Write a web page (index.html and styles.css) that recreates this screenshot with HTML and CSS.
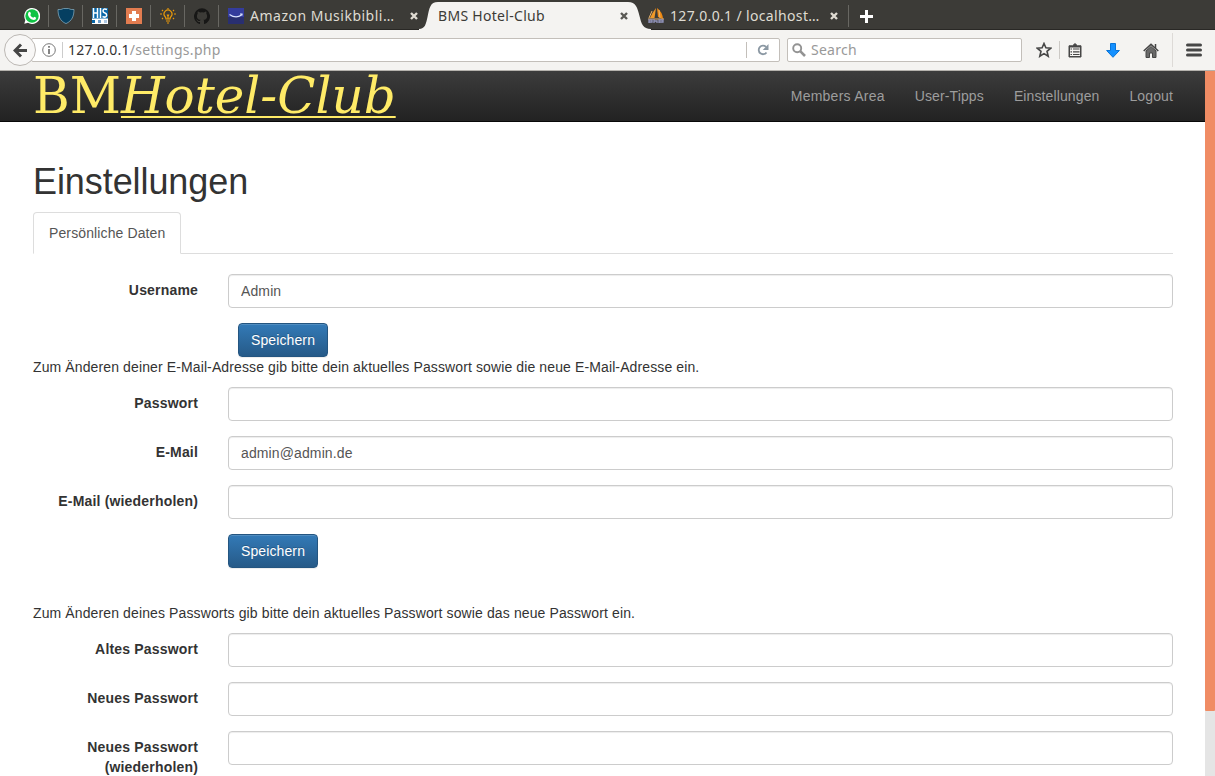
FILE: index.html
```html
<!DOCTYPE html>
<html lang="de">
<head>
<meta charset="utf-8">
<title>BMS Hotel-Club</title>
<link rel="stylesheet" href="styles.css">
</head>
<body>
<header class="browser">
  <div class="tabstrip">
    <div class="pinned"><svg width="16" height="16" viewBox="0 0 16 16"><path d="M.3 15.7 1.3 12A8 8 0 1 1 4 14.8Z" fill="#fff"/><circle cx="8" cy="8" r="6.7" fill="#0fc344"/><path d="M5 3.8 6.3 4 7 6 6.2 7Q7.2 9 9.3 9.8L10.3 8.8 12.2 9.8Q12 12 9.8 12 5.5 11.5 4 7 3.8 5 5 3.8Z" fill="#fff"/></svg></div>
    <div class="pinned"><svg width="18" height="16" viewBox="0 0 18 16"><path d="M1 1.500Q4 2 6.500.5H11.500Q14 2 17 1.500C17 8 15 13 9 15.600 3 13 1 8 1 1.500Z" fill="#053f61" stroke="#7da5b8" stroke-width=".8"/></svg></div>
    <div class="pinned"><svg width="16" height="16" viewBox="0 0 16 16"><path fill="#fff" d="M0 0H16V16H0Z"/><path fill="#0867a9" d="M0 0H16V10.500H0Z"/><path d="M1.500 0V10M5.500 0V10M1 5H6M8.500 0V10M15 1.500Q11 0 11 3 11 4.500 13 5 15 5.500 14.500 8 13.500 10 10.500 8.500" fill="none" stroke="#fff" stroke-width="1.500"/><path fill="#0867a9" d="M0 12H3V15H0Z"/><path fill="#6c9ecb" d="M6 12H9V15H6Z"/><path fill="#afc9e4" d="M12 12H15V15H12Z"/></svg></div>
    <div class="pinned"><svg width="16" height="16" viewBox="0 0 16 16"><path fill="#e27c50" d="M0 0H16V16H0Z"/><path fill="#fff" d="M6 3H10V6H13V10H10V13H6V10H3V6H6Z"/></svg></div>
    <div class="pinned"><svg width="16" height="16" viewBox="0 0 16 16" fill="none" stroke="#e99a0b" stroke-width="1.200"><path d="M6 11Q6 9.500 5 8.500A3.900 3.900 0 1 1 11 8.500Q10 9.500 10 11ZM6 13H10M7 15H9M7 6.500 8 8 9 6.500M8 8V11M8 0V1M2 2 3 3M14 2 13 3M0 6H2M14 6H16M2 11 3 10M14 11 13 10"/></svg></div>
    <div class="pinned"><svg width="16" height="16" viewBox="0 0 16 16"><path d="M8 .3a8 8 0 0 0-2.530 15.590c.4.070.55-.17.55-.38v-1.490c-2.230.48-2.700-.95-2.700-.95-.36-.92-.89-1.170-.89-1.170-.73-.5.060-.49.060-.49.8.06 1.230.83 1.230.83.720 1.220 1.870.87 2.330.66.070-.52.280-.87.5-1.070-1.770-.2-3.640-.89-3.640-3.950 0-.88.310-1.590.820-2.150-.08-.2-.36-1.020.080-2.120 0 0 .67-.21 2.200.82a7.600 7.600 0 0 1 4 0c1.530-1.040 2.200-.82 2.200-.82.440 1.100.16 1.920.080 2.120.51.560.82 1.270.82 2.150 0 3.070-1.870 3.750-3.650 3.950.29.250.54.730.54 1.480v2.200c0 .21.150.46.550.38A8 8 0 0 0 8 .3Z" fill="#171716"/></svg></div>
    <div class="tab tab-left">
      <svg width="16" height="16" viewBox="0 0 16 16"><path fill="#343c9c" d="M0 0H16V9H0Z"/><path fill="#292f70" d="M0 9H16V16H0Z"/><path d="M1.500 6.500Q8 11 13.500 7M12 6H14V7.500" fill="none" stroke="#dce5ff" stroke-width="1.200"/></svg>
      <span class="tab-title">Amazon Musikbibli…</span>
      <svg class="close" width="8" height="8" viewBox="0 0 8 8"><path d="M1 1 7 7M7 1 1 7"/></svg>
    </div>
    <div class="tab tab-active">
      <svg class="tab-shape" width="232" height="30" viewBox="0 0 232 30"><path d="M0 30V29C6 29 7 24 8.500 17 10.500 8 11 2 19 2H209C217 2 218.500 8 220.500 16 222.500 24 224 29 232 29V30Z" fill="#f4f3f1"/></svg>
      <span class="tab-title">BMS Hotel-Club</span>
      <svg class="close" width="8" height="8" viewBox="0 0 8 8"><path d="M1 1 7 7M7 1 1 7"/></svg>
    </div>
    <div class="tab tab-right">
      <svg width="16" height="16" viewBox="0 0 16 16"><path d="M8 0 6.500 10 2 10Q4 5 8 0Z" fill="#ef9929"/><path d="M9 0Q14.500 4 15 11L10 9Z" fill="#f08a12"/><path d="M4 3 1 10M11 2 12 10M0 11H16" stroke="#e9b36b"/><path d="M1 15V12H4V14H1M6 15V11M6 13H9V15M11 15V12H15V14H11" fill="none" stroke="#9295bd" stroke-width="1.300"/></svg>
      <span class="tab-title">127.0.0.1 / localhost…</span>
      <svg class="close" width="8" height="8" viewBox="0 0 8 8"><path d="M1 1 7 7M7 1 1 7"/></svg>
    </div>
    <div class="new-tab"><svg width="13" height="13" viewBox="0 0 13 13"><path d="M6.500 0V13M0 6.500H13" stroke="#fff" stroke-width="3"/></svg></div>
  </div>
  <div class="toolbar">
    <div class="back"><svg width="14" height="15" viewBox="0 0 14 15"><path d="M8 1.500 2 7.500 8 13.500M2.500 7.500H14" fill="none" stroke="#464646" stroke-width="3"/></svg></div>
    <div class="address">
      <svg width="14" height="14" viewBox="0 0 14 14"><circle cx="7" cy="7" r="6.300" fill="none" stroke="#777"/><path d="M7 6V11M7 3V4.800" stroke="#666" stroke-width="1.600"/></svg>
      <span class="url"><b>127.0.0.1</b>/settings.php</span>
      <span class="reload"><svg width="12" height="12" viewBox="0 0 12 12"><path d="M9.500 8.500A4.300 4.300 0 1 1 9 2.800" fill="none" stroke="#8b98a3" stroke-width="1.800"/><path d="M11.500 0V6H5.700Z" fill="#8b98a3"/></svg></span>
    </div>
    <div class="search"><svg width="14" height="14" viewBox="0 0 14 14"><circle cx="5.200" cy="5.200" r="4" fill="none" stroke="#939393" stroke-width="1.900"/><path d="M8.200 8.200 13 13" stroke="#939393" stroke-width="2.600"/></svg><span>Search</span></div>
    <div class="tools">
      <svg width="16" height="16" viewBox="0 0 16 16"><path d="M8 1.500 9.900 5.800 14.700 6.200 11 9.300 12.200 14.200 8 11.600 3.800 14.200 5 9.300 1.300 6.200 6.100 5.800Z" fill="none" stroke="#464646" stroke-width="1.600"/></svg>
      <span class="tool-divider"></span>
      <svg width="14" height="15" viewBox="0 0 14 15"><path d="M1 2.800H4.500L7 .6 9.500 2.800H13V14H1Z" fill="#464646" stroke="#464646" stroke-linejoin="round"/><path d="M2 4.500H12V13H2Z" fill="#f4f3f1"/><path d="M2.500 6H4M5 6H11.500M2.500 8.800H4M5 8.800H11.500M2.500 11.500H4M5 11.500H11.500" stroke="#464646" stroke-width="1.200"/></svg>
      <svg class="download" width="14" height="15" viewBox="0 0 14 15"><path d="M4.500.5H9.500V7.500H13.400L7 14.300.6 7.500H4.500Z" fill="#1490ff" stroke="#0874d8"/></svg>
      <svg class="home" width="16" height="15" viewBox="0 0 16 15"><path d="M3 8 8 3.500 13 8V14.500H9.500V10H6.500V14.500H3Z" fill="#696969" stroke="#464646"/><path d="M.7 8 8 1.300 15.300 8" fill="none" stroke="#464646" stroke-width="1.600"/><path d="M12.500 1V5" stroke="#464646" stroke-width="1.500"/></svg>
      <span class="menu-divider"></span>
      <svg width="16" height="14" viewBox="0 0 16 14"><path d="M1.500 2H14.500M1.500 7H14.500M1.500 12H14.500" stroke="#464646" stroke-width="3" stroke-linecap="round"/></svg>
    </div>
  </div>
</header>
<div class="viewport">
  <div class="page">
    <nav class="navbar">
      <a class="brand">BM<em>Hotel-Club</em></a>
      <div class="nav-links"><a class="members">Members Area</a><a>User-Tipps</a><a>Einstellungen</a><a>Logout</a></div>
    </nav>
    <main class="container">
      <h1>Einstellungen</h1>
      <div class="nav-tabs"><a>Persönliche Daten</a></div>
      <form>
        <div class="form-row"><label for="user">Username</label><input id="user" value="Admin"></div>
        <button class="btn btn-user" type="button">Speichern</button>
      </form>
      <form class="mail-form">
        <p>Zum Änderen deiner E-Mail-Adresse gib bitte dein aktuelles Passwort sowie die neue E-Mail-Adresse ein.</p>
        <div class="form-row"><label for="pass">Passwort</label><input id="pass" type="password"></div>
        <div class="form-row"><label for="mail">E-Mail</label><input id="mail" value="admin@admin.de"></div>
        <div class="form-row"><label for="mail2">E-Mail (wiederholen)</label><input id="mail2"></div>
        <button class="btn" type="button">Speichern</button>
      </form>
      <form>
        <p>Zum Änderen deines Passworts gib bitte dein aktuelles Passwort sowie das neue Passwort ein.</p>
        <div class="form-row"><label for="old">Altes Passwort</label><input id="old" type="password"></div>
        <div class="form-row"><label for="new">Neues Passwort</label><input id="new" type="password"></div>
        <div class="form-row"><label for="new2">Neues Passwort (wiederholen)</label><input id="new2" type="password"></div>
      </form>
    </main>
  </div>
  <div class="scrollbar"><div class="thumb"></div></div>
</div>
</body>
</html>
```
FILE: styles.css
```css
* { box-sizing: border-box; }
body { margin: 0; height: 776px; overflow: hidden; display: flex; flex-direction: column; background: #fff; color: #333; font: 14px/20px "Liberation Sans", Arial, sans-serif; letter-spacing: .117px; }
svg { display: block; flex: none; }
.browser { flex: none; height: 71px; font-family: "Noto Sans", "Open Sans", sans-serif; }
.tabstrip { height: 30px; display: flex; background: #3c3b37; border-bottom: 1px solid #292825; padding-left: 15px; }
.pinned { width: 34px; display: flex; align-items: center; justify-content: center; position: relative; padding-top: 2px; }
.pinned::after { content: ""; position: absolute; right: 0; top: 5px; width: 1px; height: 22px; background: #686762; }
.tab { display: flex; align-items: center; flex: none; position: relative; padding-top: 2px; color: #dfdbd2; }
.tab-title { white-space: nowrap; }
.tab-left { width: 200px; padding-left: 9px; }
.tab-left .tab-title { width: 160px; margin-left: 6px; letter-spacing: .5px; }
.tab-active { width: 232px; margin-right: -6px; padding-left: 19px; color: #3c3b37; z-index: 1; }
.tab-active .tab-title { width: 182px; letter-spacing: .3px; }
.tab-shape { position: absolute; left: 0; top: 0; }
.tab-active .tab-title, .tab-active .close { position: relative; }
.tab-right { width: 203px; padding-left: 3px; z-index: 2; }
.tab-right .tab-title { margin-left: 6px; width: 160px; letter-spacing: .35px; }
.close path { stroke: #dfdbd2; stroke-width: 2.4; }
.tab-active .close path { stroke: #595854; }
.new-tab { position: relative; padding: 10px 0 0 12px; }
.new-tab::before { content: ""; position: absolute; left: 0; top: 5px; width: 1px; height: 22px; background: #686762; }
.toolbar { height: 41px; display: flex; align-items: center; background: #f4f3f1; border-bottom: 1px solid #b5b2ad; padding-left: 4px; }
.back { width: 32px; height: 32px; border: 1px solid #bcb8b4; border-radius: 50%; background: #f8f7f6; display: flex; align-items: center; justify-content: center; flex: none; z-index: 1; }
.address { height: 24px; width: 749px; margin-left: -5px; border: 1px solid #c3bfba; border-radius: 2px; background: #fff; display: flex; align-items: center; padding-left: 10px; }
.url { margin-left: 6px; border-left: 1px solid #ccc; padding-left: 5px; line-height: 16px; color: #999; width: 684px; white-space: nowrap; letter-spacing: .28px; }
.url b { font-weight: 400; color: #333; }
.reload { border-left: 1px solid #c3bfba; height: 16px; padding: 2px 0 0 10px; }
.search { width: 235px; height: 24px; margin-left: 7px; display: flex; align-items: center; gap: 5px; border: 1px solid #c3bfba; border-radius: 2px; background: #fff; padding-left: 4px; color: #999; letter-spacing: .25px; }
.tools { display: flex; align-items: center; flex: 1; padding-left: 14px; }
.tool-divider { width: 1px; height: 18px; background: #ccc9c5; margin: 0 8px 0 7px; }
.download { margin-left: 24px; }
.home { margin-left: 23px; }
.menu-divider { width: 1px; height: 34px; background: #dddad7; margin: 0 13px; }
.viewport { display: flex; flex: none; height: 705px; }
.page { width: 1205px; flex: none; }
.navbar { height: 51px; border-bottom: 1px solid #080808; background: linear-gradient(#3c3c3c, #222); display: flex; justify-content: space-between; padding: 0 32px 0 33px; }
.brand { font: 50px/50px "DejaVu Serif", serif; letter-spacing: 0; color: #ffeb67; white-space: nowrap; }
.brand em { font-style: italic; text-decoration: underline; text-decoration-thickness: 2px; text-underline-offset: 3px; text-decoration-skip-ink: none; }
.nav-links { display: flex; gap: 30px; padding-top: 15px; color: #9d9d9d; }
.nav-links .members { letter-spacing: .25px; }
.container { padding: 40px 32px 0 33px; }
h1 { margin: 0 0 10px; font-size: 36px; line-height: 40px; font-weight: 400; letter-spacing: -.08px; }
.nav-tabs { display: flex; border-bottom: 1px solid #ddd; margin-bottom: 20px; }
.nav-tabs a { border: 1px solid #ddd; border-bottom-color: #fff; border-radius: 4px 4px 0 0; padding: 10px 15px; margin-bottom: -1px; color: #555; background: #fff; }
.form-row { display: grid; grid-template-columns: 165px 945px; column-gap: 30px; height: 34px; margin-bottom: 15px; }
label { font-weight: 700; text-align: right; padding-top: 6px; letter-spacing: .18px; }
input { width: 100%; height: 34px; padding: 6px 12px; font: inherit; letter-spacing: inherit; color: #555; border: 1px solid #ccc; border-radius: 4px; box-shadow: inset 0 1px 1px rgba(0,0,0,.075); background: #fff; }
.btn { display: block; width: 90px; height: 34px; margin-left: 195px; padding: 6px 0; font: inherit; letter-spacing: inherit; color: #fff; background: linear-gradient(#337ab7, #265a88); border: 1px solid #245580; border-radius: 4px; text-shadow: 0 -1px 0 rgba(0,0,0,.2); box-shadow: inset 0 1px 0 rgba(255,255,255,.15), 0 1px 1px rgba(0,0,0,.075); }
.btn-user { margin-left: 205px; }
p { margin: 0 0 10px; }
.mail-form { margin-bottom: 35px; }
.scrollbar { width: 10px; background: #e5e5e5; }
.thumb { height: 640px; background: #f08c64; border-radius: 0 0 1px 1px; }
```
